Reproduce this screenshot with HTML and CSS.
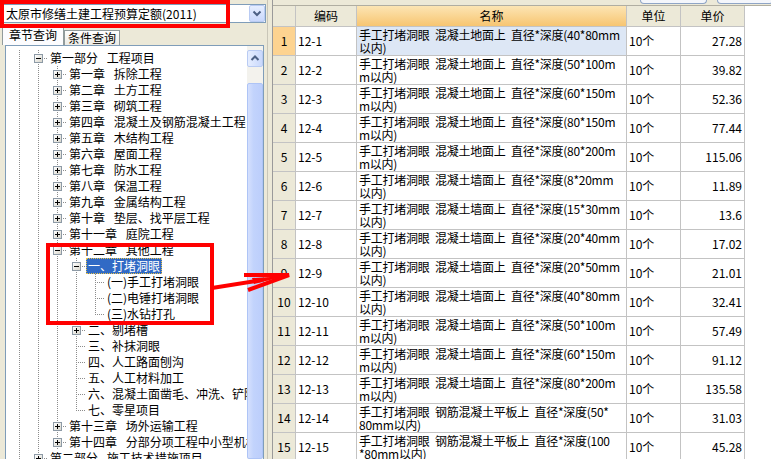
FILE: index.html
```html
<!DOCTYPE html>
<html lang="zh-CN">
<head>
<meta charset="utf-8">
<title>太原市修缮土建工程预算定额</title>
<link rel="stylesheet" href="styles.css">
</head>
<body>
<div class="app">
  <div class="left">
    <div class="combo">
      <span class="combo-text">太原市修缮土建工程预算定额(2011)</span>
      <span class="combo-btn"><svg width="14" height="15" viewBox="0 0 14 15"><path d="M3.5 5.5 L7 9 L10.5 5.5" fill="none" stroke="#4d6185" stroke-width="2"/></svg></span>
    </div>
    <div class="tabs">
      <div class="tab active">章节查询</div>
      <div class="tab">条件查询</div>
    </div>
    <div class="treebox">
      <div class="tree">
        <div class="tr"><i class="c v"></i><i class="c j"><b class="bx m"></b></i><span class="lb">第一部分 工程项目</span></div>
        <div class="tr"><i class="c v"></i><i class="c v"></i><i class="c j"><b class="bx p"></b></i><span class="lb">第一章 拆除工程</span></div>
        <div class="tr"><i class="c v"></i><i class="c v"></i><i class="c j"><b class="bx p"></b></i><span class="lb">第二章 土方工程</span></div>
        <div class="tr"><i class="c v"></i><i class="c v"></i><i class="c j"><b class="bx p"></b></i><span class="lb">第三章 砌筑工程</span></div>
        <div class="tr"><i class="c v"></i><i class="c v"></i><i class="c j"><b class="bx p"></b></i><span class="lb">第四章 混凝土及钢筋混凝土工程</span></div>
        <div class="tr"><i class="c v"></i><i class="c v"></i><i class="c j"><b class="bx p"></b></i><span class="lb">第五章 木结构工程</span></div>
        <div class="tr"><i class="c v"></i><i class="c v"></i><i class="c j"><b class="bx p"></b></i><span class="lb">第六章 屋面工程</span></div>
        <div class="tr"><i class="c v"></i><i class="c v"></i><i class="c j"><b class="bx p"></b></i><span class="lb">第七章 防水工程</span></div>
        <div class="tr"><i class="c v"></i><i class="c v"></i><i class="c j"><b class="bx p"></b></i><span class="lb">第八章 保温工程</span></div>
        <div class="tr"><i class="c v"></i><i class="c v"></i><i class="c j"><b class="bx p"></b></i><span class="lb">第九章 金属结构工程</span></div>
        <div class="tr"><i class="c v"></i><i class="c v"></i><i class="c j"><b class="bx p"></b></i><span class="lb">第十章 垫层、找平层工程</span></div>
        <div class="tr"><i class="c v"></i><i class="c v"></i><i class="c j"><b class="bx p"></b></i><span class="lb">第十一章 庭院工程</span></div>
        <div class="tr"><i class="c v"></i><i class="c v"></i><i class="c j"><b class="bx m"></b></i><span class="lb">第十二章 其他工程</span></div>
        <div class="tr"><i class="c v"></i><i class="c v"></i><i class="c v"></i><i class="c j"><b class="bx m"></b></i><span class="lb sel">一、打堵洞眼</span></div>
        <div class="tr"><i class="c v"></i><i class="c v"></i><i class="c v"></i><i class="c v"></i><i class="c j"></i><span class="lb">(一)手工打堵洞眼</span></div>
        <div class="tr"><i class="c v"></i><i class="c v"></i><i class="c v"></i><i class="c v"></i><i class="c j"></i><span class="lb">(二)电锤打堵洞眼</span></div>
        <div class="tr"><i class="c v"></i><i class="c v"></i><i class="c v"></i><i class="c v"></i><i class="c j jl"></i><span class="lb">(三)水钻打孔</span></div>
        <div class="tr"><i class="c v"></i><i class="c v"></i><i class="c v"></i><i class="c j"><b class="bx p"></b></i><span class="lb">二、剔堵槽</span></div>
        <div class="tr"><i class="c v"></i><i class="c v"></i><i class="c v"></i><i class="c j"></i><span class="lb">三、补抹洞眼</span></div>
        <div class="tr"><i class="c v"></i><i class="c v"></i><i class="c v"></i><i class="c j"></i><span class="lb">四、人工路面刨沟</span></div>
        <div class="tr"><i class="c v"></i><i class="c v"></i><i class="c v"></i><i class="c j"></i><span class="lb">五、人工材料加工</span></div>
        <div class="tr"><i class="c v"></i><i class="c v"></i><i class="c v"></i><i class="c j"></i><span class="lb">六、混凝土面凿毛、冲洗、铲除</span></div>
        <div class="tr"><i class="c v"></i><i class="c v"></i><i class="c v"></i><i class="c j jl"></i><span class="lb">七、零星项目</span></div>
        <div class="tr"><i class="c v"></i><i class="c v"></i><i class="c j"><b class="bx p"></b></i><span class="lb">第十三章 场外运输工程</span></div>
        <div class="tr"><i class="c v"></i><i class="c v"></i><i class="c j"><b class="bx p"></b></i><span class="lb">第十四章 分部分项工程中小型机械</span></div>
        <div class="tr"><i class="c v"></i><i class="c j"><b class="bx p"></b></i><span class="lb">第二部分 施工技术措施项目</span></div>
      </div>
      <div class="vscroll">
        <div class="sb-up"><svg width="14" height="15" viewBox="0 0 14 15"><path d="M3.5 9 L7 5.5 L10.5 9" fill="none" stroke="#4d6185" stroke-width="2"/></svg></div>
        <div class="sb-track"></div>
        <div class="sb-thumb"></div>
      </div>
    </div>
  </div>
  <div class="splitter"></div>
  <div class="right">
    <div class="strip"><span class="tb"></span><span class="tb tb2"></span></div>
    <div class="grid">
      <div class="row head"><div class="num"></div><div class="hc">编码</div><div class="hc hot">名称</div><div class="hc">单位</div><div class="hc">单价</div></div>
      <div class="row cur"><div class="num">1</div><div class="code">12-1</div><div class="name">手工打堵洞眼 混凝土地面上 直径*深度(40*80mm<br>以内)</div><div class="unit">10个</div><div class="price">27.28</div></div>
      <div class="row"><div class="num">2</div><div class="code">12-2</div><div class="name">手工打堵洞眼 混凝土地面上 直径*深度(50*100m<br>m以内)</div><div class="unit">10个</div><div class="price">39.82</div></div>
      <div class="row"><div class="num">3</div><div class="code">12-3</div><div class="name">手工打堵洞眼 混凝土地面上 直径*深度(60*150m<br>m以内)</div><div class="unit">10个</div><div class="price">52.36</div></div>
      <div class="row"><div class="num">4</div><div class="code">12-4</div><div class="name">手工打堵洞眼 混凝土地面上 直径*深度(80*150m<br>m以内)</div><div class="unit">10个</div><div class="price">77.44</div></div>
      <div class="row"><div class="num">5</div><div class="code">12-5</div><div class="name">手工打堵洞眼 混凝土地面上 直径*深度(80*200m<br>m以内)</div><div class="unit">10个</div><div class="price">115.06</div></div>
      <div class="row"><div class="num">6</div><div class="code">12-6</div><div class="name">手工打堵洞眼 混凝土墙面上 直径*深度(8*20mm<br>以内)</div><div class="unit">10个</div><div class="price">11.89</div></div>
      <div class="row"><div class="num">7</div><div class="code">12-7</div><div class="name">手工打堵洞眼 混凝土墙面上 直径*深度(15*30mm<br>以内)</div><div class="unit">10个</div><div class="price">13.6</div></div>
      <div class="row"><div class="num">8</div><div class="code">12-8</div><div class="name">手工打堵洞眼 混凝土墙面上 直径*深度(20*40mm<br>以内)</div><div class="unit">10个</div><div class="price">17.02</div></div>
      <div class="row"><div class="num">9</div><div class="code">12-9</div><div class="name">手工打堵洞眼 混凝土墙面上 直径*深度(20*50mm<br>以内)</div><div class="unit">10个</div><div class="price">21.01</div></div>
      <div class="row"><div class="num">10</div><div class="code">12-10</div><div class="name">手工打堵洞眼 混凝土墙面上 直径*深度(40*80mm<br>以内)</div><div class="unit">10个</div><div class="price">32.41</div></div>
      <div class="row"><div class="num">11</div><div class="code">12-11</div><div class="name">手工打堵洞眼 混凝土墙面上 直径*深度(50*100m<br>m以内)</div><div class="unit">10个</div><div class="price">57.49</div></div>
      <div class="row"><div class="num">12</div><div class="code">12-12</div><div class="name">手工打堵洞眼 混凝土墙面上 直径*深度(60*150m<br>m以内)</div><div class="unit">10个</div><div class="price">91.12</div></div>
      <div class="row"><div class="num">13</div><div class="code">12-13</div><div class="name">手工打堵洞眼 混凝土墙面上 直径*深度(80*200m<br>m以内)</div><div class="unit">10个</div><div class="price">135.58</div></div>
      <div class="row"><div class="num">14</div><div class="code">12-14</div><div class="name">手工打堵洞眼 钢筋混凝土平板上 直径*深度(50*<br>80mm以内)</div><div class="unit">10个</div><div class="price">31.03</div></div>
      <div class="row"><div class="num">15</div><div class="code">12-15</div><div class="name">手工打堵洞眼 钢筋混凝土平板上 直径*深度(100<br>*80mm以内)</div><div class="unit">10个</div><div class="price">45.28</div></div>
    </div>
  </div>
  <svg class="marks" width="771" height="459" viewBox="0 0 771 459">
    <rect x="2" y="2" width="226" height="24" fill="none" stroke="#ff0000" stroke-width="4"/>
    <rect x="48" y="245" width="164" height="78" fill="none" stroke="#ff0000" stroke-width="4"/>
    <path d="M212 288 L262 280" fill="none" stroke="#ff0000" stroke-width="4"/>
    <path d="M244 275 L289 275 L248 290" fill="none" stroke="#ff0000" stroke-width="4"/>
    <path d="M252 278 L286 276 L254 284 Z" fill="#ff0000"/>
  </svg>
</div>
</body>
</html>
```

FILE: styles.css
```css
* { box-sizing: border-box; }
html, body { margin: 0; padding: 0; }
body {
  width: 771px;
  height: 459px;
  overflow: hidden;
  background: #fff;
  font-family: "Noto Sans CJK SC", "Liberation Sans", sans-serif;
  font-size: 12px;
  color: #000;
}
.app {
  position: relative;
  display: flex;
  width: 771px;
  height: 459px;
  overflow: hidden;
}

/* ---------- left panel ---------- */
.left {
  width: 267px;
  flex: none;
  background: #ece9d8;
  display: flex;
  flex-direction: column;
}
.combo {
  margin: 4px 1px 0 0;
  height: 19px;
  border: 1px solid #7f9db9;
  background: #fff;
  display: flex;
  align-items: center;
}
.combo-text {
  flex: 1;
  padding-left: 5px;
  line-height: 17px;
  white-space: nowrap;
  overflow: hidden;
}
.combo-btn {
  width: 16px;
  height: 17px;
  flex: none;
  display: flex;
  align-items: center;
  justify-content: center;
  border: 1px solid #b9cbf3;
  border-radius: 2px;
  background: linear-gradient(#e6eeff, #c9d8fc);
}
.tabs {
  height: 22px;
  display: flex;
  align-items: flex-end;
  padding-left: 2px;
}
.tab {
  height: 15px;
  width: 56px;
  border: 1px solid #919b9c;
  border-bottom: none;
  background: linear-gradient(#fefefe, #ecebe5);
  line-height: 14px;
  text-align: center;
  white-space: nowrap;
}
.tab.active {
  height: 21px;
  width: 62px;
  border-top: none;
  background: #fcfcfe;
  box-shadow: inset 0 2px 0 #f7b23b;
  line-height: 22px;
  padding-top: 0;
}
.treebox {
  flex: 1;
  min-height: 0;
  margin: 0 3px 0 5px;
  border: 1px solid #7f9db9;
  border-bottom: none;
  background: #fff;
  display: flex;
}
.tree {
  flex: 1;
  min-width: 0;
  overflow: hidden;
  padding: 4px 0 0 4px;
}
.tr {
  display: flex;
  height: 16px;
  white-space: nowrap;
}
.c {
  flex: none;
  width: 19px;
  height: 16px;
  display: flex;
  align-items: center;
  justify-content: center;
  background-repeat: no-repeat;
}
.v {
  background-image: repeating-linear-gradient(to bottom, #8c8c8c 0 1px, transparent 1px 2px);
  background-size: 1px 16px;
  background-position: 9px 0;
}
.j {
  background-image:
    repeating-linear-gradient(to bottom, #8c8c8c 0 1px, transparent 1px 2px),
    repeating-linear-gradient(to right, #8c8c8c 0 1px, transparent 1px 2px);
  background-size: 1px 16px, 10px 1px;
  background-position: 9px 0, 9px 8px;
}
.j.jl { background-size: 1px 8px, 10px 1px; }
.bx {
  width: 9px;
  height: 9px;
  border: 1px solid #8d9aa6;
  background-repeat: no-repeat;
}
.bx.m {
  background-image: linear-gradient(#000, #000), linear-gradient(135deg, #ffffff, #d8d6cc);
  background-size: 5px 1px, 100% 100%;
  background-position: center, 0 0;
}
.bx.p {
  background-image: linear-gradient(#000, #000), linear-gradient(#000, #000), linear-gradient(135deg, #ffffff, #d8d6cc);
  background-size: 5px 1px, 1px 5px, 100% 100%;
  background-position: center, center, 0 0;
}
.lb {
  height: 16px;
  line-height: 14px;
  padding: 0 1px;
  border: 1px solid transparent;
  word-spacing: 6px;
}
.lb.sel {
  background: #316ac5;
  color: #fff;
  border: 1px dotted #e8c34a;
}
.vscroll {
  width: 16px;
  flex: none;
  display: flex;
  flex-direction: column;
  padding-top: 4px;
  background: #f4f3ee;
}
.sb-up {
  height: 17px;
  flex: none;
  display: flex;
  align-items: center;
  justify-content: center;
  border: 1px solid #b9cbf3;
  border-radius: 2px;
  background: linear-gradient(to right, #e6eeff, #c9d8fc);
}
.sb-track {
  height: 16px;
  flex: none;
  background: #f3f2ed;
}
.sb-thumb {
  flex: 1;
  border: 1px solid #aec4f6;
  border-radius: 2px;
  background: linear-gradient(to right, #d5e0fd, #c2d3fc 40%, #bccefb);
}
.splitter {
  width: 5px;
  flex: none;
  background: #ece9d8;
  border-left: 1px solid #c9c6b8;
}

/* ---------- right panel ---------- */
.right {
  flex: 1;
  display: flex;
  flex-direction: column;
  background: #fff;
  border-left: 1px solid #9a9a9a;
}
.strip {
  height: 6px;
  flex: none;
  background: #ece9d8;
  border-bottom: 1px solid #b0aea2;
  display: flex;
  justify-content: flex-end;
}
.tb {
  width: 67px;
  height: 4px;
  margin-right: 10px;
  border: 1px solid #8fa5c6;
  border-top: none;
  border-radius: 0 0 4px 4px;
  background: #f4f6fb;
}
.tb.tb2 { width: 56px; margin-right: -2px; }
.grid {
  width: 472px;
}
.row {
  display: grid;
  grid-template-columns: 23px 61px 270px 54px 64px;
  height: 29px;
}
.row > div {
  border-right: 1px solid #c3c3c3;
  border-bottom: 1px solid #c3c3c3;
  white-space: nowrap;
  overflow: hidden;
}
.row.head { height: 21px; }
.row.head > div {
  background: #ece9d8;
  text-align: center;
  line-height: 20px;
}
.row.head > .hot {
  background: linear-gradient(#fce5b4, #f7c571);
}
.num {
  background: #ece9d8;
  text-align: center;
  line-height: 28px;
}
.row.cur .num { background: #fdd390; }
.row.cur .name { background: #dde7f5; }
.code, .unit {
  line-height: 28px;
  padding-left: 2px;
}
.name {
  padding: 1px 2px 0 2px;
  line-height: 13px;
  word-spacing: 3px;
  letter-spacing: -0.25px;
}
.price {
  line-height: 28px;
  text-align: right;
  padding-right: 2px;
}

/* annotation overlay */
.marks {
  position: absolute;
  left: 0;
  top: 0;
  pointer-events: none;
}
```
